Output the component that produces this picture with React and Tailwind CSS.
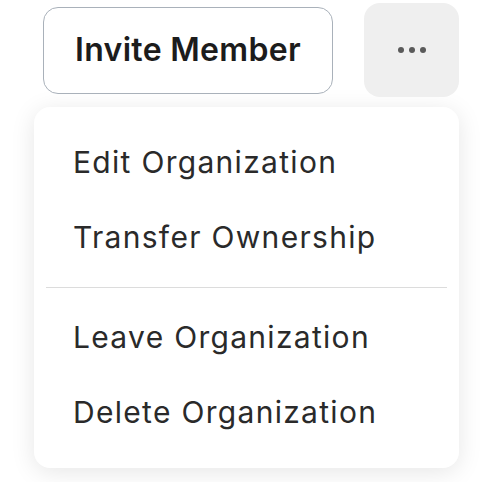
export default function App() {
  const items = ["Edit Organization", "Transfer Ownership"];
  const items2 = ["Leave Organization", "Delete Organization"];

  return (
    <div
      className="min-h-screen w-full bg-white pl-[34px] pt-[3px]"
      style={{ fontFamily: "Inter, 'Noto Sans', sans-serif" }}
    >
      <div className="w-[425px]">
        <div className="flex items-center justify-end gap-[31px]">
          <button className="h-[87px] w-[290px] rounded-[15px] border-[1.5px] border-[#a9b1ba] bg-white text-[32px] font-semibold tracking-[0.3px] text-[#1c1c1c]">
            Invite Member
          </button>
          <button className="flex h-[94px] w-[95px] items-center justify-center gap-[5px] rounded-[16px] bg-[#efefef]">
            <span className="h-[6px] w-[6px] rounded-full bg-[#5a5a5a]" />
            <span className="h-[6px] w-[6px] rounded-full bg-[#5a5a5a]" />
            <span className="h-[6px] w-[6px] rounded-full bg-[#5a5a5a]" />
          </button>
        </div>

        <div className="mt-[10px] rounded-[16px] bg-white px-3 py-[18px] shadow-[0_4px_24px_rgba(0,0,0,0.10)]">
          {items.map((label) => (
            <div
              key={label}
              className="flex h-[75px] items-center px-[27px] text-[30px] tracking-[1.3px] text-[#2a2a2a]"
            >
              {label}
            </div>
          ))}
          <div className="my-3 h-px bg-[#dcdcdc]" />
          {items2.map((label) => (
            <div
              key={label}
              className="flex h-[75px] items-center px-[27px] text-[30px] tracking-[1.3px] text-[#2a2a2a]"
            >
              {label}
            </div>
          ))}
        </div>
      </div>
    </div>
  );
}
